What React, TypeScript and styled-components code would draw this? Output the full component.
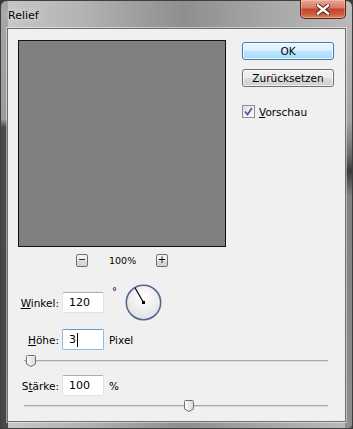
import styled, { createGlobalStyle } from "styled-components";

const GlobalStyle = createGlobalStyle`
  html, body {
    margin: 0;
    padding: 0;
  }
  body {
    width: 353px;
    height: 429px;
    overflow: hidden;
    background: #3a3a3a;
    font-family: "DejaVu Sans", Tahoma, sans-serif;
    font-size: 10.5px;
    color: #000;
  }
`;

const Window = styled.div`
  width: 353px;
  height: 429px;
  box-sizing: border-box;
  display: flex;
  flex-direction: column;
  padding: 0 6px 6px 6px;
  border: 1px solid #3f3f3f;
  border-radius: 7px 7px 4px 4px;
  background:
    linear-gradient(to bottom, #a6a6a6 0px, #9c9c9c 118px, #4b4b4b 126px, #474747 100%) left / 7px 100% no-repeat,
    linear-gradient(to bottom, #bdbdbd 0px, #a2a2a2 120px, #6a6a6a 155px, #3a3a3a 170px, #808080 195px, #8e8e8e 100%) right / 7px 100% no-repeat,
    linear-gradient(to right, #c8c8c8 0%, #b4b4b4 22%, #8e8e8e 52%, #a6a6a6 75%, #bababa 100%);
`;

const TitleBar = styled.div`
  height: 27px;
  display: flex;
  align-items: flex-start;
`;

const Title = styled.span`
  font-size: 11px;
  padding: 8px 0 0 1px;
  color: #000;
  text-shadow: 0 0 6px rgba(255, 255, 255, 0.9);
`;

const CloseButton = styled.div`
  margin: -1px 0 0 auto;
  width: 46px;
  height: 19px;
  box-sizing: border-box;
  display: flex;
  align-items: center;
  justify-content: center;
  border: 1px solid #5b2419;
  border-top: none;
  border-radius: 0 0 5px 5px;
  background: linear-gradient(to bottom, #e9a898 0%, #d87a64 42%, #c2452c 52%, #cf5a3f 80%, #e0866a 100%);
  box-shadow: inset 0 0 0 1px rgba(255, 220, 210, 0.35);
`;

const Client = styled.div`
  flex: 1;
  display: flex;
  flex-direction: column;
  padding: 11px 10px 0 10px;
  background: #f0f0f0;
  border: 1px solid #6f6f6f;
  box-shadow: 0 0 0 1px rgba(255, 255, 255, 0.45);
`;

const TopSection = styled.div`
  display: flex;
  gap: 16px;
`;

const PreviewColumn = styled.div`
  width: 208px;
  display: flex;
  flex-direction: column;
`;

const Preview = styled.div`
  height: 207px;
  box-sizing: border-box;
  border: 1px solid #141414;
  background: #808080;
`;

const ZoomRow = styled.div`
  margin-top: 6px;
  height: 14px;
  display: flex;
  align-items: center;
  justify-content: center;
  gap: 21px;
`;

const ZoomButton = styled.div`
  width: 12px;
  height: 13px;
  box-sizing: border-box;
  border: 1px solid #707070;
  border-radius: 2px;
  background: linear-gradient(to bottom, #f4f4f4 0%, #ebebeb 50%, #dcdcdc 51%, #d0d0d0 100%);
  display: flex;
  align-items: center;
  justify-content: center;
  font-size: 10px;
  line-height: 1;
`;

const ZoomValue = styled.span`
  font-size: 9.5px;
  width: 26px;
  text-align: center;
`;

const ButtonColumn = styled.div`
  display: flex;
  flex-direction: column;
  padding-top: 2px;
`;

const PushButton = styled.div<{ $default?: boolean }>`
  width: 92px;
  height: 18px;
  box-sizing: border-box;
  display: flex;
  align-items: center;
  justify-content: center;
  border: 1px solid ${(p) => (p.$default ? "#3c7fb1" : "#707070")};
  border-radius: 3px;
  background: ${(p) =>
    p.$default
      ? "linear-gradient(to bottom, #eaf6fd 0%, #d9f0fc 50%, #bee6fd 51%, #a7d9f5 100%)"
      : "linear-gradient(to bottom, #f2f2f2 0%, #ebebeb 50%, #dddddd 51%, #cfcfcf 100%)"};
  box-shadow: inset 0 0 0 1px rgba(255, 255, 255, 0.7);
  & + & {
    margin-top: 9px;
  }
`;

const CheckRow = styled.label`
  margin-top: 18px;
  display: flex;
  align-items: center;
  gap: 4px;
`;

const CheckBox = styled.span`
  width: 13px;
  height: 13px;
  box-sizing: border-box;
  border: 1px solid #8e8f8f;
  background: linear-gradient(135deg, #dcdcdc 0%, #f4f4f4 60%, #ffffff 100%);
  display: flex;
  align-items: center;
  justify-content: center;
`;

const Controls = styled.div`
  margin-top: 17px;
  display: flex;
  flex-direction: column;
`;

const FieldRow = styled.div<{ $gapTop: number }>`
  margin-top: ${(p) => p.$gapTop}px;
  display: flex;
  align-items: center;
`;

const Label = styled.span`
  width: 41px;
  text-align: right;
  margin-right: 3px;
  white-space: nowrap;
`;

const TextField = styled.div<{ $focused?: boolean }>`
  width: 42px;
  height: 21px;
  box-sizing: border-box;
  display: flex;
  align-items: center;
  padding-left: 6px;
  background: #fff;
  border: 1px solid ${(p) => (p.$focused ? "#8cbbe6" : "#dde2e8")};
  border-top-color: ${(p) => (p.$focused ? "#5a9bd8" : "#abadb3")};
  border-radius: 2px;
  font-size: 11px;
`;

const Caret = styled.span`
  width: 1px;
  height: 14px;
  background: #000;
  margin-left: 1px;
`;

const Unit = styled.span`
  margin-left: 5px;
`;

const Degree = styled.span`
  align-self: flex-start;
  margin: 2px 8px 0 8px;
  font-size: 10px;
`;

const SliderTrack = styled.div<{ $gapTop: number }>`
  position: relative;
  margin: ${(p) => p.$gapTop}px 0 0 6px;
  width: 304px;
  height: 12px;
  &::before {
    content: "";
    position: absolute;
    left: 0;
    right: 0;
    top: 5px;
    height: 1px;
    background: #a9a9a9;
    box-shadow: 0 1px 0 #dadada;
  }
`;

const Thumb = styled.svg`
  position: absolute;
  top: 0;
`;

const SliderThumb = ({ pos }: { pos: number }) => (
  <Thumb width="10" height="12" viewBox="0 0 10 12" style={{ left: pos }}>
    <defs>
      <linearGradient id="tg" x1="0" y1="0" x2="1" y2="0">
        <stop offset="0" stopColor="#ffffff" />
        <stop offset="1" stopColor="#d8d8d8" />
      </linearGradient>
    </defs>
    <path d="M1.5 0.5 H8.5 Q9.5 0.5 9.5 1.5 V9 L5 11.5 L0.5 9 V1.5 Q0.5 0.5 1.5 0.5 Z" fill="url(#tg)" stroke="#707070" />
  </Thumb>
);

const Dial = () => (
  <svg width="37" height="37" viewBox="0 0 37 37">
    <defs>
      <radialGradient id="dg" cx="0.5" cy="0.35" r="0.65">
        <stop offset="0" stopColor="#ffffff" />
        <stop offset="1" stopColor="#e2e2e2" />
      </radialGradient>
    </defs>
    <circle cx="18.5" cy="18.5" r="17.2" fill="url(#dg)" stroke="#55678e" strokeWidth="1.6" />
    <line x1="18.5" y1="18.5" x2="10" y2="3.8" stroke="#000" strokeWidth="1.2" />
    <rect x="17" y="17" width="3" height="3" fill="#000" />
  </svg>
);

export default function App() {
  return (
    <>
      <GlobalStyle />
      <Window>
        <TitleBar>
          <Title>Relief</Title>
          <CloseButton>
            <svg width="14" height="11" viewBox="0 0 14 11">
              <path d="M2 1.5 L12 9.5 M12 1.5 L2 9.5" stroke="#4a1a12" strokeWidth="4.2" strokeLinecap="square" />
              <path d="M2 1.5 L12 9.5 M12 1.5 L2 9.5" stroke="#ffffff" strokeWidth="2.4" strokeLinecap="square" />
            </svg>
          </CloseButton>
        </TitleBar>
        <Client>
          <TopSection>
            <PreviewColumn>
              <Preview />
              <ZoomRow>
                <ZoomButton>−</ZoomButton>
                <ZoomValue>100%</ZoomValue>
                <ZoomButton>+</ZoomButton>
              </ZoomRow>
            </PreviewColumn>
            <ButtonColumn>
              <PushButton $default>OK</PushButton>
              <PushButton>Zurücksetzen</PushButton>
              <CheckRow>
                <CheckBox>
                  <svg width="9" height="9" viewBox="0 0 9 9">
                    <path d="M1 4.5 L3.5 7.5 L8 1" fill="none" stroke="#4a5d9c" strokeWidth="1.7" />
                  </svg>
                </CheckBox>
                <span>
                  <u>V</u>orschau
                </span>
              </CheckRow>
            </ButtonColumn>
          </TopSection>
          <Controls>
            <FieldRow $gapTop={0}>
              <Label>
                <u>W</u>inkel:
              </Label>
              <TextField>120</TextField>
              <Degree>°</Degree>
              <Dial />
            </FieldRow>
            <FieldRow $gapTop={8}>
              <Label>
                <u>H</u>öhe:
              </Label>
              <TextField $focused>
                3<Caret />
              </TextField>
              <Unit>Pixel</Unit>
            </FieldRow>
            <SliderTrack $gapTop={5}>
              <SliderThumb pos={2} />
            </SliderTrack>
            <FieldRow $gapTop={8}>
              <Label>
                S<u>t</u>ärke:
              </Label>
              <TextField>100</TextField>
              <Unit>%</Unit>
            </FieldRow>
            <SliderTrack $gapTop={4}>
              <SliderThumb pos={160} />
            </SliderTrack>
          </Controls>
        </Client>
      </Window>
    </>
  );
}
